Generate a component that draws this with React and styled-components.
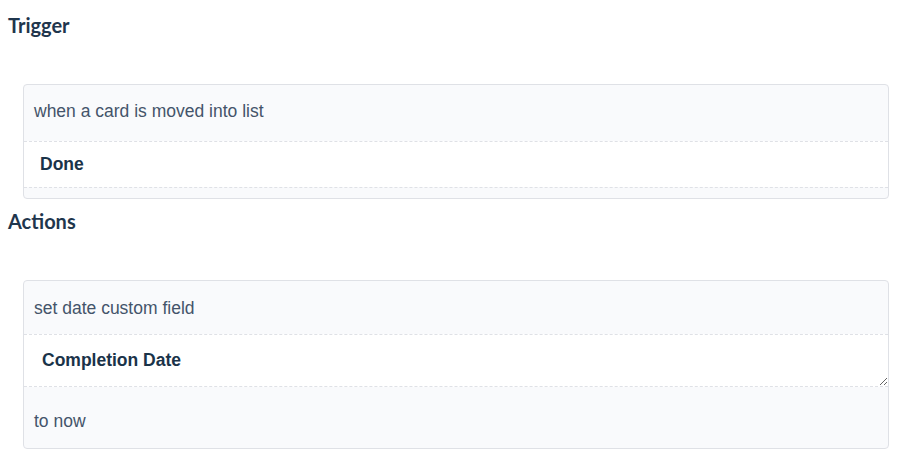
import React from "react";
import styled, { createGlobalStyle } from "styled-components";

const GlobalStyle = createGlobalStyle`
  * { box-sizing: border-box; }
  body {
    margin: 0;
    background: #ffffff;
    font-family: "Liberation Sans", Arial, sans-serif;
  }
`;

const Page = styled.div`
  width: 903px;
  padding: 13px 14px 0 8px;
  display: flex;
  flex-direction: column;
  gap: 10px;
`;

const Section = styled.section`
  display: flex;
  flex-direction: column;
`;

const Heading = styled.h2`
  margin: 0 0 47px;
  font-family: Lato, "Open Sans", sans-serif;
  font-size: 20px;
  line-height: 24px;
  font-weight: 700;
  color: #1f364d;
`;

const Card = styled.div`
  margin-left: 15px;
  border: 1px solid #dfe1e6;
  border-radius: 4px;
  background: #f9fafc;
  overflow: hidden;
`;

const Row = styled.div`
  padding: ${(p) => p.$pad || "16px 10px 20px"};
  font-size: 17.5px;
  line-height: 20px;
  color: #44546a;
  & + & {
    border-top: 1px dashed #dfe1e6;
  }
`;

const Value = styled(Row)`
  background: #ffffff;
  font-weight: 700;
  color: #1a3349;
`;

const Spacer = styled(Row)`
  height: 11px;
  padding: 0;
`;

const Field = styled.textarea`
  display: block;
  width: 100%;
  height: 53px;
  margin: 0;
  padding: 15px 18px 16px;
  border: none;
  border-top: 1px dashed #dfe1e6;
  border-bottom: 1px dashed #dfe1e6;
  background: #ffffff;
  font-family: "Liberation Sans", Arial, sans-serif;
  font-size: 17.5px;
  line-height: 20px;
  font-weight: 700;
  color: #1a3349;
  resize: vertical;
  outline: none;
`;

export default function App() {
  return (
    <>
      <GlobalStyle />
      <Page>
        <Section>
          <Heading>Trigger</Heading>
          <Card>
            <Row $pad="16px 10px 20px">when a card is moved into list</Row>
            <Value $pad="12px 16px 13px">Done</Value>
            <Spacer />
          </Card>
        </Section>
        <Section>
          <Heading>Actions</Heading>
          <Card>
            <Row $pad="17px 10px 16px">set date custom field</Row>
            <Field defaultValue="Completion Date" />
            <Row $pad="24px 10px 17px">to now</Row>
          </Card>
        </Section>
      </Page>
    </>
  );
}
